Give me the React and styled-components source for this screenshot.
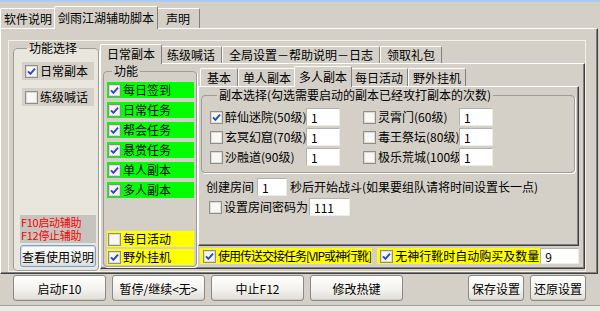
import React from 'react'
import styled, { createGlobalStyle } from 'styled-components'

const GlobalStyle = createGlobalStyle`
  html, body {
    margin: 0;
    padding: 0;
    background: #d4d0c8;
  }
  body {
    font-family: "Noto Sans CJK SC", "Noto Sans", sans-serif;
    font-size: 12px;
    line-height: 14px;
    color: #000;
  }
  * {
    box-sizing: border-box;
  }
`

const FONT = `"Noto Sans CJK SC", "Noto Sans", sans-serif`

function Check({ checked }) {
  return (
    <CheckBox width="13" height="13" viewBox="0 0 13 13">
      <rect x="0.5" y="0.5" width="12" height="12" fill="#f7f7f4" stroke="#8e8f8f" />
      <rect x="1.5" y="1.5" width="10" height="10" fill="none" stroke="#dcdcd5" />
      {checked && (
        <path d="M3 6.3 L5.4 8.8 L10 3.6" fill="none" stroke="#2a47c4" strokeWidth="1.9" />
      )}
    </CheckBox>
  )
}

const dungeons = [
  ['醉仙迷院(50级)', true],
  ['灵霄门(60级)', false],
  ['玄冥幻窟(70级)', false],
  ['毒王祭坛(80级)', false],
  ['沙融道(90级)', false],
  ['极乐荒城(100级)', false],
]

const greenItems = ['每日签到', '日常任务', '帮会任务', '悬赏任务', '单人副本', '多人副本']

function App() {
  return (
    <>
      <GlobalStyle />
      <Window>
        <TitleEdge />
        <TabRow $h={26} $pl={0}>
          <Tab $h={20} $pad={3}>软件说明</Tab>
          <Tab $h={20} $pad={3} $active>剑雨江湖辅助脚本</Tab>
          <Tab $h={20} $pad={3} $min={44}>声明</Tab>
        </TabRow>

        <OuterPage>
          <PageFrame>
            <SideGroup>
              <Legend $indent={7}>功能选择</Legend>
              <SideOption>
                <Check checked />
                日常副本
              </SideOption>
              <SideOption>
                <Check />
                练级喊话
              </SideOption>
              <Spacer />
              <HotkeyNote>
                <span>F10启动辅助</span>
                <span>F12停止辅助</span>
              </HotkeyNote>
              <HelpButton>查看使用说明</HelpButton>
            </SideGroup>

            <TabControl>
              <TabRow $h={20} $pl={2}>
                <Tab $h={17} $pad={6} $active>日常副本</Tab>
                <Tab $h={17} $pad={6}>练级喊话</Tab>
                <Tab $h={17} $pad={6}>全局设置－帮助说明－日志</Tab>
                <Tab $h={17} $pad={6}>领取礼包</Tab>
              </TabRow>
              <InnerPanel>
                <FeatureGroup>
                  <Legend $indent={5}>功能</Legend>
                  {greenItems.map((t) => (
                    <FeatureRow key={t} $bg="#00ff00">
                      <Check checked />
                      {t}
                    </FeatureRow>
                  ))}
                  <Spacer />
                  <FeatureRow $bg="#ffff00">
                    <Check />
                    每日活动
                  </FeatureRow>
                  <FeatureRow $bg="#ffff00" $last>
                    <Check checked />
                    野外挂机
                  </FeatureRow>
                </FeatureGroup>

                <RightColumn>
                  <TabRow $h={20} $pl={2}>
                    <Tab $h={18} $pad={4} $min={38}>基本</Tab>
                    <Tab $h={18} $pad={4} $min={38}>单人副本</Tab>
                    <Tab $h={18} $pad={4} $min={38} $active>多人副本</Tab>
                    <Tab $h={18} $pad={4} $min={38}>每日活动</Tab>
                    <Tab $h={18} $pad={4} $min={38}>野外挂机</Tab>
                  </TabRow>
                  <SubPanel>
                    <DungeonGroup>
                      <Legend $indent={7}>副本选择(勾选需要启动的副本已经攻打副本的次数)</Legend>
                      <DungeonGrid>
                        {dungeons.map(([name, on]) => (
                          <Entry key={name}>
                            <EntryLabel>
                              <Check checked={on} />
                              <span>{name}</span>
                            </EntryLabel>
                            <Field $w={34} defaultValue="1" />
                          </Entry>
                        ))}
                      </DungeonGrid>
                    </DungeonGroup>
                    <LineRow $top={5} $pl={6}>
                      创建房间
                      <Field $w={30} $mx={3} defaultValue="1" />
                      <NoWrap>秒后开始战斗(如果要组队请将时间设置长一点)</NoWrap>
                    </LineRow>
                    <LineRow $top={2} $pl={9}>
                      <Check />
                      <Gap />
                      设置房间密码为
                      <Field $w={41} $mx={1} defaultValue="111" />
                    </LineRow>
                  </SubPanel>
                  <YellowRow>
                    <YellowBox $ls={-1}>
                      <Check checked />
                      使用传送交接任务[VIP或神行靴]
                    </YellowBox>
                    <YellowBox $ls={0} $tight>
                      <Check checked />
                      无神行靴时自动购买及数量
                    </YellowBox>
                    <Field $w={39} $h={16} defaultValue="9" />
                  </YellowRow>
                </RightColumn>
              </InnerPanel>
            </TabControl>
          </PageFrame>
        </OuterPage>

        <ButtonBar>
          <Button $w={93}>启动F10</Button>
          <Button $w={93}>{'暂停/继续<无>'}</Button>
          <Button $w={93}>中止F12</Button>
          <Button $w={93}>修改热键</Button>
          <Spacer />
          <Button $w={56}>保存设置</Button>
          <Button $w={56}>还原设置</Button>
        </ButtonBar>
        <BottomEdge />
      </Window>
    </>
  )
}

const Window = styled.div`
  width: 600px;
  height: 311px;
  display: flex;
  flex-direction: column;
  background: #d4d0c8;
  overflow: hidden;
`

const TitleEdge = styled.div`
  flex: none;
  height: 2px;
  background: #a9ccf0;
`

const TabRow = styled.div`
  flex: none;
  height: ${(p) => p.$h}px;
  display: flex;
  align-items: flex-end;
  padding-left: ${(p) => p.$pl}px;
`

const Tab = styled.div`
  position: relative;
  z-index: ${(p) => (p.$active ? 2 : 1)};
  display: flex;
  align-items: center;
  justify-content: center;
  height: ${(p) => (p.$active ? p.$h + 3 : p.$h)}px;
  min-width: ${(p) => p.$min || 0}px;
  margin: 0 ${(p) => (p.$active ? -2 : 0)}px ${(p) => (p.$active ? -1 : 0)}px;
  padding: 0 ${(p) => p.$pad}px ${(p) => (p.$active ? 1 : 0)}px;
  background: #d4d0c8;
  border: 1px solid #fff;
  border-bottom: none;
  border-right-color: #808080;
  border-radius: 2px 2px 0 0;
  white-space: nowrap;
`

const OuterPage = styled.div`
  flex: none;
  width: 598px;
  height: 246px;
  display: flex;
  flex-direction: column;
  padding: 11px 11px 1px 7px;
  border-top: 1px solid #fff;
  border-left: 1px solid #fff;
  border-right: 1px solid #404040;
  border-bottom: 1px solid #404040;
  box-shadow: inset -1px -1px 0 #808080;
`

const PageFrame = styled.div`
  flex: 1;
  display: flex;
  gap: 1px;
  padding-left: 4px;
  border: 1px solid #f3f1e3;
`

const GroupBase = styled.fieldset`
  margin: 0;
  min-width: 0;
  display: flex;
  flex-direction: column;
  border: 1px solid #9e9c94;
  border-radius: 4px;
  box-shadow: 1px 1px 0 #fff;
`

const Legend = styled.legend`
  margin-left: ${(p) => p.$indent}px;
  padding: 0 2px;
  line-height: 14px;
  font-size: 12px;
  white-space: nowrap;
`

const SideGroup = styled(GroupBase)`
  width: 86px;
  padding: 7px 2px 3px 6px;
  background: #e8e6dd;
`

const SideOption = styled.div`
  display: flex;
  align-items: center;
  gap: 2px;
  height: 18px;
  margin: 0 2px 8px 2px;
  padding-left: 3px;
  background: #d4d0c8;
`

const Spacer = styled.div`
  flex: 1;
`

const HotkeyNote = styled.div`
  height: 28px;
  display: flex;
  flex-direction: column;
  justify-content: center;
  padding-left: 1px;
  background: #c6c4be;
  color: #ff0000;
  font-size: 11px;
  line-height: 13px;
  letter-spacing: -0.3px;
  white-space: nowrap;
`

const HelpButton = styled.button`
  height: 22px;
  margin-top: 2px;
  padding: 0;
  border: 1px solid #7d9dcb;
  border-radius: 3px;
  background: linear-gradient(#fdfdfc, #eeede8 70%, #dddbd3);
  box-shadow: inset 0 0 0 1px #cfdff3;
  font-family: ${FONT};
  font-size: 12px;
  color: #000;
`

const TabControl = styled.div`
  flex: 1;
  display: flex;
  flex-direction: column;
  margin: 2px 0 2px;
`

const InnerPanel = styled.div`
  flex: 1;
  display: flex;
  gap: 1px;
  padding: 0 4px 1px 2px;
  border-top: 1px solid #fff;
  border-left: 1px solid #fff;
  border-right: 1px solid #404040;
  border-bottom: 1px solid #404040;
  box-shadow: inset -1px -1px 0 #808080;
`

const FeatureGroup = styled(GroupBase)`
  width: 94px;
  padding: 4px 2px 1px 3px;
`

const FeatureRow = styled.div`
  display: flex;
  align-items: center;
  gap: 2px;
  height: 16px;
  margin-bottom: ${(p) => (p.$last ? 0 : p.$bg === '#00ff00' ? 4 : 2)}px;
  padding-left: 1px;
  background: ${(p) => p.$bg};
  white-space: nowrap;
`

const RightColumn = styled.div`
  width: 381px;
  display: flex;
  flex-direction: column;
  padding-top: 2px;
`

const SubPanel = styled.div`
  height: 160px;
  display: flex;
  flex-direction: column;
  padding: 1px 3px 0 1px;
  border-top: 1px solid #fff;
  border-left: 1px solid #fff;
  border-right: 1px solid #404040;
  border-bottom: 1px solid #404040;
  box-shadow: inset -1px -1px 0 #808080;
`

const DungeonGroup = styled(GroupBase)`
  width: 374px;
  margin-left: 1px;
  padding: 6px 0 6px 8px;
`

const DungeonGrid = styled.div`
  display: grid;
  grid-template-columns: 130px 130px;
  column-gap: 23px;
  row-gap: 2px;
`

const Entry = styled.div`
  display: flex;
  height: 18px;
`

const EntryLabel = styled.div`
  width: 96px;
  display: flex;
  align-items: center;
  gap: 2px;
  overflow: hidden;
  white-space: nowrap;
`

const Field = styled.input`
  flex: none;
  width: ${(p) => p.$w}px;
  height: ${(p) => p.$h || 18}px;
  margin: 0 ${(p) => p.$mx || 0}px;
  padding: 0 0 0 4px;
  border: 1px solid;
  border-color: #b3b2ac #ebebe8 #ebebe8 #b3b2ac;
  background: #fff;
  font-family: ${FONT};
  font-size: 12px;
  color: #000;
  outline: none;
`

const LineRow = styled.div`
  display: flex;
  align-items: center;
  height: 18px;
  margin-top: ${(p) => p.$top}px;
  padding-left: ${(p) => p.$pl}px;
  white-space: nowrap;
`

const NoWrap = styled.span`
  white-space: nowrap;
`

const Gap = styled.span`
  width: 2px;
`

const YellowRow = styled.div`
  display: flex;
  align-items: center;
  height: 16px;
  margin-top: 2px;
  padding-left: 2px;
  gap: 5px;
`

const YellowBox = styled.div`
  display: flex;
  align-items: center;
  gap: 2px;
  height: 16px;
  padding: 0 1px 0 3px;
  margin-right: ${(p) => (p.$tight ? -5 : 0)}px;
  background: #ffff00;
  letter-spacing: ${(p) => p.$ls}px;
  white-space: nowrap;
`

const CheckBox = styled.svg`
  flex: none;
  display: block;
`

const ButtonBar = styled.div`
  flex: none;
  height: 31px;
  display: flex;
  gap: 5px;
  padding: 1px 14px 0 13px;
  align-items: flex-start;
`

const Button = styled.button`
  flex: none;
  width: ${(p) => p.$w}px;
  height: 26px;
  padding: 0;
  border: 1px solid #8a8985;
  border-radius: 3px;
  background: linear-gradient(#ffffff, #f3f2ee 55%, #dfddd6);
  box-shadow: inset 0 -1px 0 #cfcdc5;
  font-family: ${FONT};
  font-size: 12px;
  color: #000;
  white-space: nowrap;

  & + & {
    margin-left: ${(p) => (p.$w === 56 ? 1 : 0)}px;
  }
`

const BottomEdge = styled.div`
  flex: none;
  height: 6px;
  border-top: 1px solid #a19f98;
  background: #eceae4;
`

export default App
